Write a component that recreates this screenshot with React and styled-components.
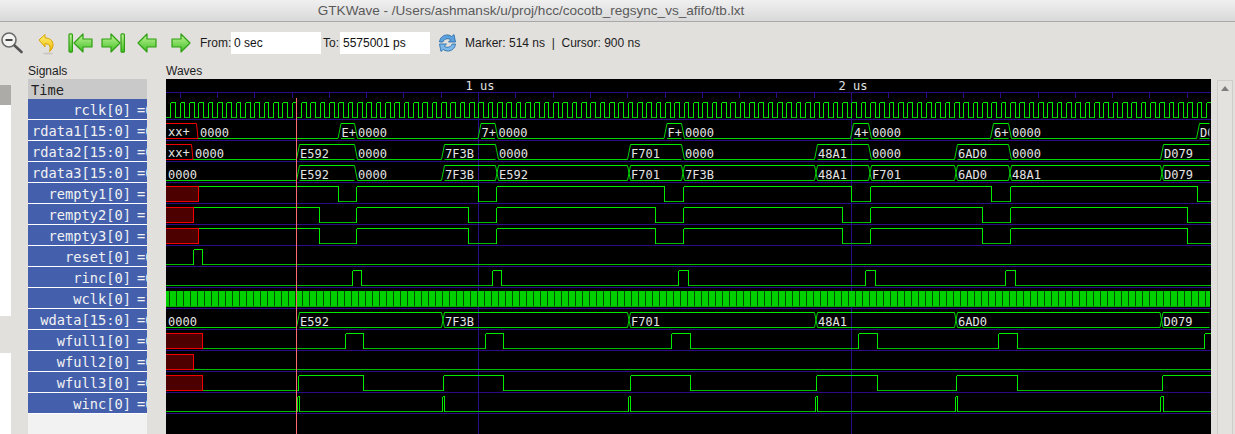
import React from "react";
import styled, { createGlobalStyle } from "styled-components";

const Global = createGlobalStyle`
  html, body { margin: 0; padding: 0; background: #e2e0dc; overflow: hidden; }
  #root { width: 1235px; height: 434px; }
`;
const Window = styled.div`
  width: 1235px; height: 434px; display: flex; flex-direction: column; overflow: hidden;
  background: #e2e0dc; font-family: "Liberation Sans", Arial, sans-serif; color: #1c1c1c;
`;
const TitleBar = styled.div`
  height: 21px; flex: none; display: flex; align-items: center; justify-content: center;
  padding-right: 173px; box-sizing: content-box; font-size: 13.55px; color: #5a5a5a;
  background: linear-gradient(#f0f0f0, #d9d9d9); border-bottom: 1px solid #a9a9a9;
`;
const Toolbar = styled.div`
  height: 22px; flex: none; margin-top: 10px; display: flex; align-items: center; font-size: 12px;
`;
const ToolButton = styled.div`
  width: ${p => p.$w}px; flex: none; height: 24px; display: flex; align-items: center;
  padding-left: ${p => p.$pad || 0}px; box-sizing: border-box;
`;
const FieldLabel = styled.span`
  width: ${p => p.$w}px; flex: none; white-space: pre; box-sizing: border-box;
  padding-left: ${p => p.$pad || 0}px;
`;
const Field = styled.div`
  width: ${p => p.$w}px; height: 22px; flex: none; background: #fff; display: flex; align-items: center;
  padding-left: 3px; box-sizing: border-box; color: #111;
`;
const Status = styled.span`
  white-space: pre; margin-left: 8px;
`;
const PaneLabels = styled.div`
  height: 17px; flex: none; display: flex; align-items: center; font-size: 12px; padding-left: 28px;
  margin-top: 8px;
`;
const PaneLabel = styled.span`
  width: ${p => p.$w}px; flex: none;
`;
const Panes = styled.div`
  flex: 1; display: flex; min-height: 0;
`;
const TreeStrip = styled.div`
  width: 11px; margin-right: 17px; flex: none; display: flex; flex-direction: column;
`;
const StripBlock = styled.div`
  height: ${p => p.$h}px; flex: ${p => (p.$h ? "none" : 1)}; background: ${p => p.$c};
`;
const SignalList = styled.div`
  width: 119px; margin-right: 19px; flex: none; background: #f2f2f2; overflow: hidden;
  font-family: "DejaVu Sans Mono", monospace; font-size: 13.7px;
`;
const TimeHead = styled.div`
  height: 20px; background: #c9c9c9; color: #222; line-height: 22px; padding-left: 3px; overflow: hidden;
`;
const SignalRow = styled.div`
  height: 20px; line-height: 22px; background: #4460ad; color: #f2f2f2; border-bottom: 1px solid #fff;
  display: flex; justify-content: flex-end; white-space: pre; overflow: hidden;
`;
const SignalName = styled.span`
  flex: none;
`;
const SignalValue = styled.span`
  flex: none; width: 16px; padding-left: 6px; box-sizing: content-box; overflow: hidden; margin-right: -6px;
`;
const WaveView = styled.svg`
  width: 1045px; height: 355px; flex: none; display: block; background: #000;
`;
const WaveText = styled.text`
  font-family: "DejaVu Sans Mono", monospace; font-size: 12px; fill: #e4e4e4;
`;
const Gutter = styled.div`
  flex: 1; padding: 1px 2px 0 6px; display: flex;
`;
const ScrollTrack = styled.div`
  flex: 1; border: 1px solid #cfcdc9; border-bottom: 0; background: #e4e2de; display: flex; justify-content: center;
  padding-top: 5px;
`;
const ScrollArrow = styled.div`
  width: 0; height: 0; border-left: 4px solid transparent; border-right: 4px solid transparent;
  border-bottom: 5px solid #7d7d7d;
`;

const IconDefs = styled.svg`
  position: absolute; width: 0; height: 0;
`;
const ARROW_DEFS = (
  <IconDefs>
    <defs>
      <linearGradient id="grn" x1="0" y1="0" x2="0" y2="1">
        <stop offset="0" stopColor="#c4f59a" />
        <stop offset="1" stopColor="#3fc024" />
      </linearGradient>
      <linearGradient id="yel" x1="0" y1="0" x2="0" y2="1">
        <stop offset="0" stopColor="#fff27a" />
        <stop offset="1" stopColor="#f0b800" />
      </linearGradient>
    </defs>
  </IconDefs>
);

const ZoomOut = () => (
  <svg width="24" height="24" viewBox="0 0 24 24">
    <circle cx="9" cy="9" r="7" fill="#f3f3f1" stroke="#6a6a6a" strokeWidth="1.6" />
    <path d="M5.5 9h7" stroke="#333" strokeWidth="1.8" />
    <path d="M14.5 14.5L21.5 21" stroke="#555" strokeWidth="2.6" strokeLinecap="round" />
  </svg>
);
const Undo = () => (
  <svg width="20" height="24" viewBox="0 0 20 24">
    <path d="M3 9L9 3.5V7c5 0 8 2.5 8 7 0 3-1.5 5-3.5 6.5 1-3 .8-5.5-.8-6.8-1-.8-2.2-1-3.7-1V16z"
      fill="url(#yel)" stroke="#d8a400" strokeWidth="1" strokeLinejoin="round" />
    <ellipse cx="12" cy="22.5" rx="5" ry="1" fill="#c9c7c3" />
  </svg>
);
const LEFT = "M1 10L10 1v5h9v8h-9v5z";
const RIGHT = "M19 10L10 1v5H1v8h9v5z";
const arrowStyle = { fill: "url(#grn)", stroke: "#2f9e12", strokeWidth: 1.2, strokeLinejoin: "round" };
const First = () => (
  <svg width="25" height="20" viewBox="0 0 25 20">
    <rect x="1" y="0.8" width="3.4" height="18.4" rx="1" {...arrowStyle} />
    <g transform="translate(5 0)"><path d={LEFT} {...arrowStyle} /></g>
  </svg>
);
const Last = () => (
  <svg width="25" height="20" viewBox="0 0 25 20">
    <path d={RIGHT} {...arrowStyle} />
    <rect x="20" y="0.8" width="3.4" height="18.4" rx="1" {...arrowStyle} />
  </svg>
);
const Prev = () => (
  <svg width="20" height="20" viewBox="0 0 20 20"><path d={LEFT} {...arrowStyle} /></svg>
);
const Next = () => (
  <svg width="20" height="20" viewBox="0 0 20 20"><path d={RIGHT} {...arrowStyle} /></svg>
);
const Reload = () => (
  <svg width="19" height="20" viewBox="0 0 19 20">
    <path d="M1.5 9C2 4.5 5.5 1.5 10 2c1.5.2 2.8.8 3.8 1.6L16 1.5l1.5 7.5h-7l2.2-2.2C11 5.2 6.5 5 4.8 9z"
      fill="#5da2dc" stroke="#2d6fae" strokeWidth="0.9" strokeLinejoin="round" />
    <path d="M17.5 11c-.5 4.5-4 7.5-8.5 7-1.5-.2-2.8-.8-3.8-1.6L3 18.5 1.5 11h7l-2.2 2.2c1.7 1.6 6.2 1.8 7.9-2.2z"
      fill="#7db8e8" stroke="#2d6fae" strokeWidth="0.9" strokeLinejoin="round" />
  </svg>
);

const signals = [
  ["rclk[0]", "0"], ["rdata1[15:0]", "0"], ["rdata2[15:0]", "0"], ["rdata3[15:0]", "0"],
  ["rempty1[0]", "1"], ["rempty2[0]", "1"], ["rempty3[0]", "1"], ["reset[0]", "0"],
  ["rinc[0]", "0"], ["wclk[0]", "1"], ["wdata[15:0]", "0"], ["wfull1[0]", "0"],
  ["wfull2[0]", "0"], ["wfull3[0]", "0"], ["winc[0]", "0"],
];

const HI = "#00ea00", LO = "#00bc00", PURPLE = "#2c0c86", X0 = 166, XE = 1210;
const hiY = k => 102.5 + 21 * k;
const loY = k => 117.5 + 21 * k;
const gridY = k => 119.5 + 21 * k;

function Bit({ k, start = 0, xFrom = X0, edges }) {
  const h = hiY(k), l = loY(k);
  let hiD = "", loD = "", v = "";
  let x = xFrom, lvl = start;
  [...edges, XE + 0.5].forEach((e, i, a) => {
    if (lvl) hiD += `M${x} ${h}H${e}`; else loD += `M${x} ${l}H${e}`;
    if (i < a.length - 1) v += `M${e} ${h}V${l}`;
    x = e; lvl = 1 - lvl;
  });
  return (
    <g fill="none">
      <path d={loD} stroke={LO} />
      <path d={hiD} stroke={HI} />
      <path d={v} stroke={HI} />
    </g>
  );
}
function RedBox({ k, end }) {
  const h = hiY(k), l = loY(k);
  return <path d={`M${X0} ${h}H${end}V${l}H${X0}`} fill="#4c0000" stroke="#f00000" />;
}
function Bus({ k, segs, xEnd = 1209.5 }) {
  const h = hiY(k), l = loY(k), s = 1.5;
  let top = "", bot = "", diag = "";
  segs.forEach((seg, i) => {
    const a = seg[0], nz = !seg[2];
    const b = i + 1 < segs.length ? segs[i + 1][0] : xEnd + s;
    const ax = i === 0 ? a : a + s, bx = i + 1 < segs.length ? b - s : xEnd;
    bot += `M${ax} ${l}H${bx}`;
    if (nz) top += `M${ax} ${h}H${bx}`;
    if (i > 0) {
      const prev = segs[i - 1];
      if (nz) diag += `M${a - s} ${l}L${ax} ${h}`;
      if (!prev[2]) diag += `M${a - s} ${h}L${ax} ${l}`;
      if (!nz && prev[2]) diag += `M${a - s} ${l}H${ax}`;
    }
  });
  return (
    <g>
      <g fill="none" stroke={HI}>
        <path d={top} />
        <path d={bot} stroke="#00d800" />
        <path d={diag} stroke="#00d000" />
      </g>
      <clipPath id={`bus${k}`}><rect x="166" y="80" width="1043.5" height="354" /></clipPath>
      <g clipPath={`url(#bus${k})`}>
        {segs.map(seg => (
          <WaveText key={seg[0]} x={seg[0] + 2} y={l - 2}>{seg[1]}</WaveText>
        ))}
      </g>
    </g>
  );
}
const XBox = ({ k, end }) => (
  <path d={`M${X0} ${hiY(k)}H${end - 1.5}L${end} ${loY(k)}H${X0}`} fill="none" stroke="#f00000" />
);

const Z = "0000";
const d2 = [[298, "E592"], [356, Z, 1], [443, "7F3B"], [497, Z, 1], [629, "F701"], [683, Z, 1], [816, "48A1"], [870, Z, 1], [956, "6AD0"], [1010, Z, 1], [1162, "D079"]];
const d3 = [[166, Z, 1], [298, "E592"], [356, Z, 1], [443, "7F3B"], [497, "E592"], [629, "F701"], [683, "7F3B"], [816, "48A1"], [870, "F701"], [956, "6AD0"], [1010, "48A1"], [1162, "D079"]];
const d1 = [[198, Z, 1], [339.5, "E+"], [356, Z, 1], [479.5, "7+"], [496.5, Z, 1], [665.5, "F+"], [683, Z, 1], [852, "4+"], [870, Z, 1], [992, "6+"], [1010, Z, 1], [1198, "D079"]];
const wd = [[166, Z, 1], [298, "E592"], [443, "7F3B"], [629, "F701"], [816, "48A1"], [956, "6AD0"], [1161.5, "D079"]];

const ticks = [];
for (let n = -8; n < 20; n++) ticks.push(478.5 + 37.3 * n);
const rclkEdges = [];
for (let x = 170.4; x < 1210; x += 4.665) rclkEdges.push(Math.round(x) + 0.5);
const wclkLines = [];
for (let x = 169.5; x < 1210; x += 7) wclkLines.push(x);

const Waves = () => (
  <WaveView viewBox="166 79 1045 355">
    <g stroke={PURPLE} fill="none" shapeRendering="crispEdges">
      <path d="M166 92.5H1211" />
      {ticks.filter(t => t > 166 && t < 1210).map(t => (
        <path key={t} d={`M${Math.floor(t) + 0.5} 92V98`} />
      ))}
      {signals.map((_, k) => <path key={k} d={`M166 ${gridY(k)}H1211`} />)}
      <path d="M478.5 92V434M851.5 92V434" />
    </g>
    <WaveText x="465.5" y="90">1 us</WaveText>
    <WaveText x="838.5" y="90">2 us</WaveText>

    <g shapeRendering="crispEdges">
      <Bit k={0} edges={rclkEdges} />
      <Bit k={4} start={1} xFrom={198.5} edges={[338.5, 356.5, 478.5, 496.5, 664.5, 683.5, 851.5, 870.5, 991.5, 1010.5, 1197.5]} />
      <RedBox k={4} end={198.5} />
      <Bit k={5} start={1} xFrom={193.5} edges={[319.5, 356.5, 468.5, 496.5, 655.5, 683.5, 842.5, 870.5, 982.5, 1010.5, 1187.5]} />
      <RedBox k={5} end={193.5} />
      <Bit k={6} start={1} xFrom={198.5} edges={[319.5, 356.5, 468.5, 496.5, 655.5, 683.5, 842.5, 870.5, 982.5, 1010.5, 1187.5]} />
      <RedBox k={6} end={198.5} />
      <Bit k={7} edges={[193.5, 202.5]} />
      <Bit k={8} edges={[352.5, 361.5, 492.5, 501.5, 678.5, 688.5, 865.5, 875.5, 1005.5, 1015.5]} />
      <rect x="166" y="291" width="1044" height="15" fill="#00d000" />
      <path d={wclkLines.map(x => `M${x} 291V306`).join("")} stroke="#004c00" />
      <path d="M166 306.5H1210" stroke="#00a800" />
      <Bit k={11} xFrom={202.5} edges={[345.5, 363.5, 485.5, 503.5, 671.5, 690.5, 858.5, 877.5, 998.5, 1017.5, 1204.5]} />
      <RedBox k={11} end={202.5} />
      <Bit k={12} xFrom={193.5} edges={[]} />
      <RedBox k={12} end={193.5} />
      <Bit k={13} xFrom={202.5} edges={[298.5, 363.5, 443.5, 503.5, 630.5, 690.5, 816.5, 877.5, 956.5, 1017.5, 1162.5]} />
      <RedBox k={13} end={202.5} />
      <Bit k={14} edges={[297.5, 299.5, 442.5, 444.5, 628.5, 630.5, 815.5, 817.5, 955.5, 957.5, 1160.5, 1163.5]} />
    </g>

    <XBox k={1} end={198} />
    <WaveText x="168" y="136">xx+</WaveText>
    <Bus k={1} segs={d1} />
    <XBox k={2} end={193} />
    <WaveText x="168" y="157">xx+</WaveText>
    <Bus k={2} segs={[[193, Z, 1], ...d2]} />
    <Bus k={3} segs={d3} />
    <Bus k={10} segs={wd} />

    <path d="M296.5 98V434" stroke="#ff6a72" shapeRendering="crispEdges" />
  </WaveView>
);

export default function App() {
  return (
    <Window>
      <Global />
      {ARROW_DEFS}
      <TitleBar>GTKWave - /Users/ashmansk/u/proj/hcc/cocotb_regsync_vs_afifo/tb.lxt</TitleBar>
      <Toolbar>
        <ToolButton $w={36}><ZoomOut /></ToolButton>
        <ToolButton $w={32}><Undo /></ToolButton>
        <ToolButton $w={33}><First /></ToolButton>
        <ToolButton $w={36}><Last /></ToolButton>
        <ToolButton $w={34}><Prev /></ToolButton>
        <ToolButton $w={29}><Next /></ToolButton>
        <FieldLabel $w={31}>From:</FieldLabel>
        <Field $w={90}>0 sec</Field>
        <FieldLabel $w={19} $pad={2}>To:</FieldLabel>
        <Field $w={90}>5575001 ps</Field>
        <ToolButton $w={27} $pad={8}><Reload /></ToolButton>
        <Status>Marker: 514 ns  |  Cursor: 900 ns</Status>
      </Toolbar>
      <PaneLabels>
        <PaneLabel $w={138}>Signals</PaneLabel>
        <PaneLabel $w={100}>Waves</PaneLabel>
      </PaneLabels>
      <Panes>
        <TreeStrip>
          <StripBlock $h={6} $c="#e2e0dc" />
          <StripBlock $h={20} $c="#adaba7" />
          <StripBlock $h={211} $c="#ffffff" />
          <StripBlock $h={37} $c="#e2e0dc" />
          <StripBlock $c="#ffffff" />
        </TreeStrip>
        <SignalList>
          <TimeHead>Time</TimeHead>
          {signals.map(([name, value]) => (
            <SignalRow key={name}>
              <SignalName>{name}</SignalName>
              <SignalValue>={value}</SignalValue>
            </SignalRow>
          ))}
        </SignalList>
        <Waves />
        <Gutter>
          <ScrollTrack><ScrollArrow /></ScrollTrack>
        </Gutter>
      </Panes>
    </Window>
  );
}
